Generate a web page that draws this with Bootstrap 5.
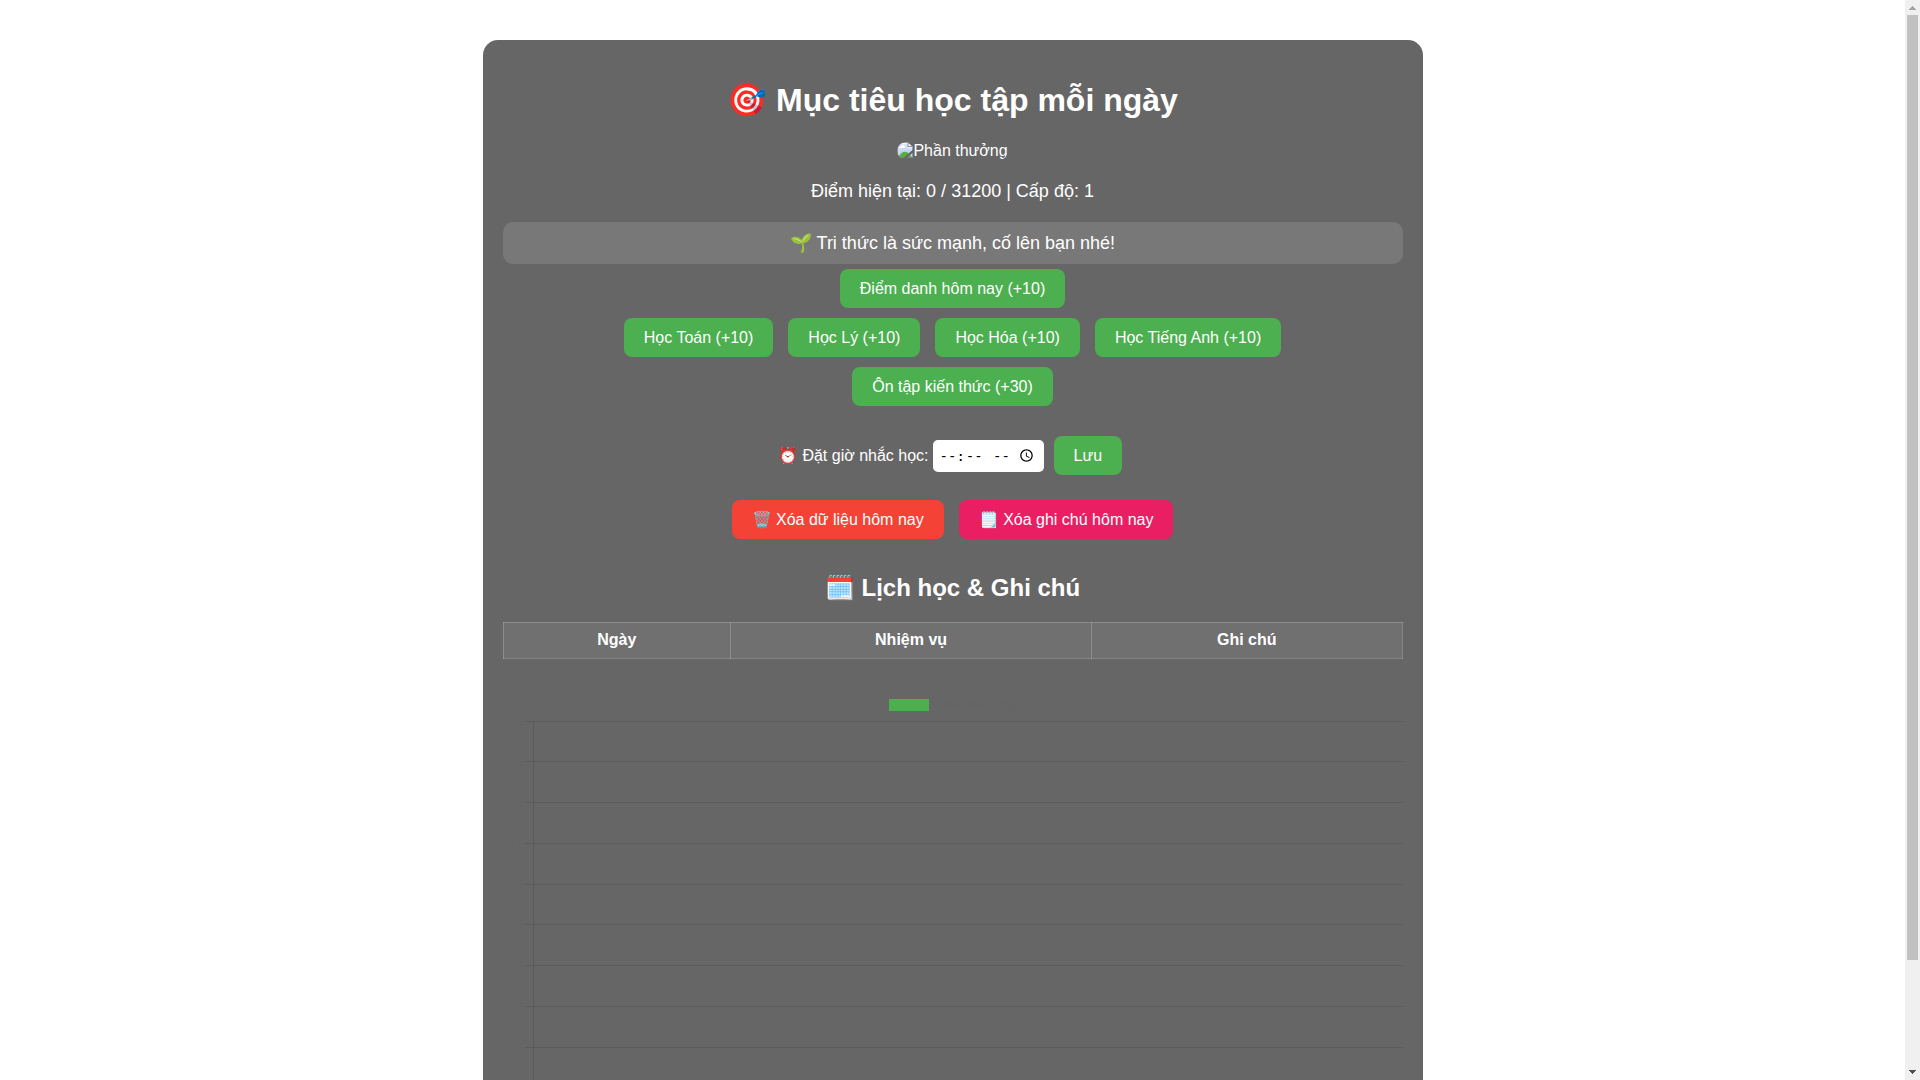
<!DOCTYPE html>
<html lang="vi">
<head>
<meta charset="utf-8">
<meta name="viewport" content="width=device-width, initial-scale=1">
<title>Mục tiêu học tập mỗi ngày</title>
<link href="https://cdn.jsdelivr.net/npm/bootstrap@5.3.0/dist/css/bootstrap.min.css" rel="stylesheet">
<style>
  body { font-family: "Liberation Sans", Arial, sans-serif; line-height: normal; color: #fff; background: #fff; }
  .view { min-width: 0; }
  .study-panel { max-width: 940px; margin: 40px auto; background: #666; border-radius: 15px; padding: 20px; }
  h1 { font-size: 32px; line-height: 37px; margin: 22px 0; }
  h2 { font-size: 24px; line-height: 28px; margin: 35px 0 20px; }
  .reward { border-radius: 10px; }
  .score { font-size: 18px; line-height: 21px; margin: 21px 0 20px; }
  .quote { font-size: 18px; line-height: 22px; padding: 10px; border-radius: 10px; background: rgba(255,255,255,.12); }
  .btn-study { --bs-btn-color: #fff; --bs-btn-bg: #4caf50; --bs-btn-hover-color: #fff; --bs-btn-hover-bg: #43a047; --bs-btn-border-width: 0; --bs-btn-padding-x: 20px; --bs-btn-padding-y: 10px; --bs-btn-line-height: 19px; --bs-btn-border-radius: 8px; }
  .btn-wipe { --bs-btn-bg: #f44336; --bs-btn-hover-bg: #d7372b; }
  .btn-note { --bs-btn-bg: #e91e63; --bs-btn-hover-bg: #c91855; }
  .stack { gap: 10px; margin-top: 5px; }
  .subjects { column-gap: 15px; row-gap: 10px; }
  .reminder { margin: 30px 0 25px; gap: 4px; }
  .reminder .btn { margin: 0 5px 0 6px; }
  .time-box { border: 0; border-radius: 5px; padding: 8px 7px; width: 111px; height: 32px; background: #fff; color: #000; font: 14px "DejaVu Sans Mono", monospace; }
  .cleanup { gap: 15px; }
  .plan { width: 100%; border-collapse: collapse; }
  .plan th { border: 1px solid rgba(255,255,255,.2); background: rgba(255,255,255,.07); padding: 8px; height: 36px; line-height: 18px; text-align: center; }
  .chart { width: 100%; height: 450px; margin-top: 30px; }
  .chart text { font-size: 12px; fill: #656565; }
  .grid-lines line { stroke: #5b5b5b; shape-rendering: crispEdges; }
  .scroll-track { width: 15px; background: #f0f0f0; padding: 0 2px; }
  .scroll-arrow { height: 15px; }
  .scroll-room { flex: 1 1 0; }
  .scroll-thumb { height: 90%; background: #c1c1c1; }
</style>
</head>
<body>
<div class="d-flex vh-100 overflow-hidden">
<div class="view flex-grow-1 overflow-hidden">
<main class="study-panel text-center">
  <h1 class="fw-bold">🎯 Mục tiêu học tập mỗi ngày</h1>
  <img class="reward" src="reward.png" alt="Phần thưởng">
  <p class="score">Điểm hiện tại: 0 / 31200 | Cấp độ: 1</p>
  <div class="quote">🌱 Tri thức là sức mạnh, cố lên bạn nhé!</div>

  <div class="stack d-flex flex-column align-items-center">
    <button type="button" class="btn btn-study">Điểm danh hôm nay (+10)</button>
    <div class="subjects d-flex flex-wrap justify-content-center">
      <button type="button" class="btn btn-study">Học Toán (+10)</button>
      <button type="button" class="btn btn-study">Học Lý (+10)</button>
      <button type="button" class="btn btn-study">Học Hóa (+10)</button>
      <button type="button" class="btn btn-study">Học Tiếng Anh (+10)</button>
    </div>
    <button type="button" class="btn btn-study">Ôn tập kiến thức (+30)</button>
  </div>

  <div class="reminder d-flex flex-wrap align-items-baseline justify-content-center">
    <label for="remindTime">⏰ Đặt giờ nhắc học:</label>
    <input type="time" id="remindTime" class="time-box">
    <button type="button" class="btn btn-study">Lưu</button>
  </div>

  <div class="cleanup d-flex flex-wrap justify-content-center">
    <button type="button" class="btn btn-study btn-wipe">🗑️ Xóa dữ liệu hôm nay</button>
    <button type="button" class="btn btn-study btn-note">🗒️ Xóa ghi chú hôm nay</button>
  </div>

  <h2 class="fw-bold">🗓️ Lịch học &amp; Ghi chú</h2>
  <table class="plan">
    <thead><tr><th scope="col">Ngày</th><th scope="col">Nhiệm vụ</th><th scope="col">Ghi chú</th></tr></thead>
    <tbody></tbody>
  </table>

  <svg class="chart d-block" role="img" aria-label="Điểm mỗi ngày">
    <svg x="50%" overflow="visible">
      <rect x="-64" y="10" width="40" height="12" fill="#4caf50"/>
      <text x="-16" y="20">Điểm mỗi ngày</text>
    </svg>
    <g class="grid-lines">
      <line x1="22" x2="100%" y1="32.5" y2="32.5"/>
      <line x1="22" x2="100%" y1="72.5" y2="72.5"/>
      <line x1="22" x2="100%" y1="113.5" y2="113.5"/>
      <line x1="22" x2="100%" y1="154.5" y2="154.5"/>
      <line x1="22" x2="100%" y1="195.5" y2="195.5"/>
      <line x1="22" x2="100%" y1="235.5" y2="235.5"/>
      <line x1="22" x2="100%" y1="276.5" y2="276.5"/>
      <line x1="22" x2="100%" y1="317.5" y2="317.5"/>
      <line x1="22" x2="100%" y1="358.5" y2="358.5"/>
      <line x1="22" x2="100%" y1="399.5" y2="399.5"/>
      <line x1="22" x2="100%" y1="439.5" y2="439.5"/>
      <line x1="30.5" x2="30.5" y1="32" y2="447"/>
    </g>
    <g text-anchor="end">
      <text x="20" y="37">1.0</text>
      <text x="20" y="77">0.9</text>
      <text x="20" y="118">0.8</text>
      <text x="20" y="159">0.7</text>
      <text x="20" y="200">0.6</text>
      <text x="20" y="240">0.5</text>
      <text x="20" y="281">0.4</text>
      <text x="20" y="322">0.3</text>
      <text x="20" y="363">0.2</text>
    </g>
  </svg>
</main>
</div>
<div class="scroll-track d-flex flex-column flex-shrink-0" aria-hidden="true">
  <svg class="scroll-arrow" viewBox="0 0 11 15" shape-rendering="crispEdges"><path d="M2 10V9h1V8h1V7h1V6h1V7h1V8h1V9h1V10z" fill="#a3a3a3"/></svg>
  <div class="scroll-room"><div class="scroll-thumb"></div></div>
  <svg class="scroll-arrow" viewBox="0 0 11 15" shape-rendering="crispEdges"><path d="M2 5H9V6H8V7H7V8H6V9H5V8H4V7H3V6H2z" fill="#505050"/></svg>
</div>
</div>
<script src="https://cdn.jsdelivr.net/npm/bootstrap@5.3.0/dist/js/bootstrap.bundle.min.js"></script>
</body>
</html>
